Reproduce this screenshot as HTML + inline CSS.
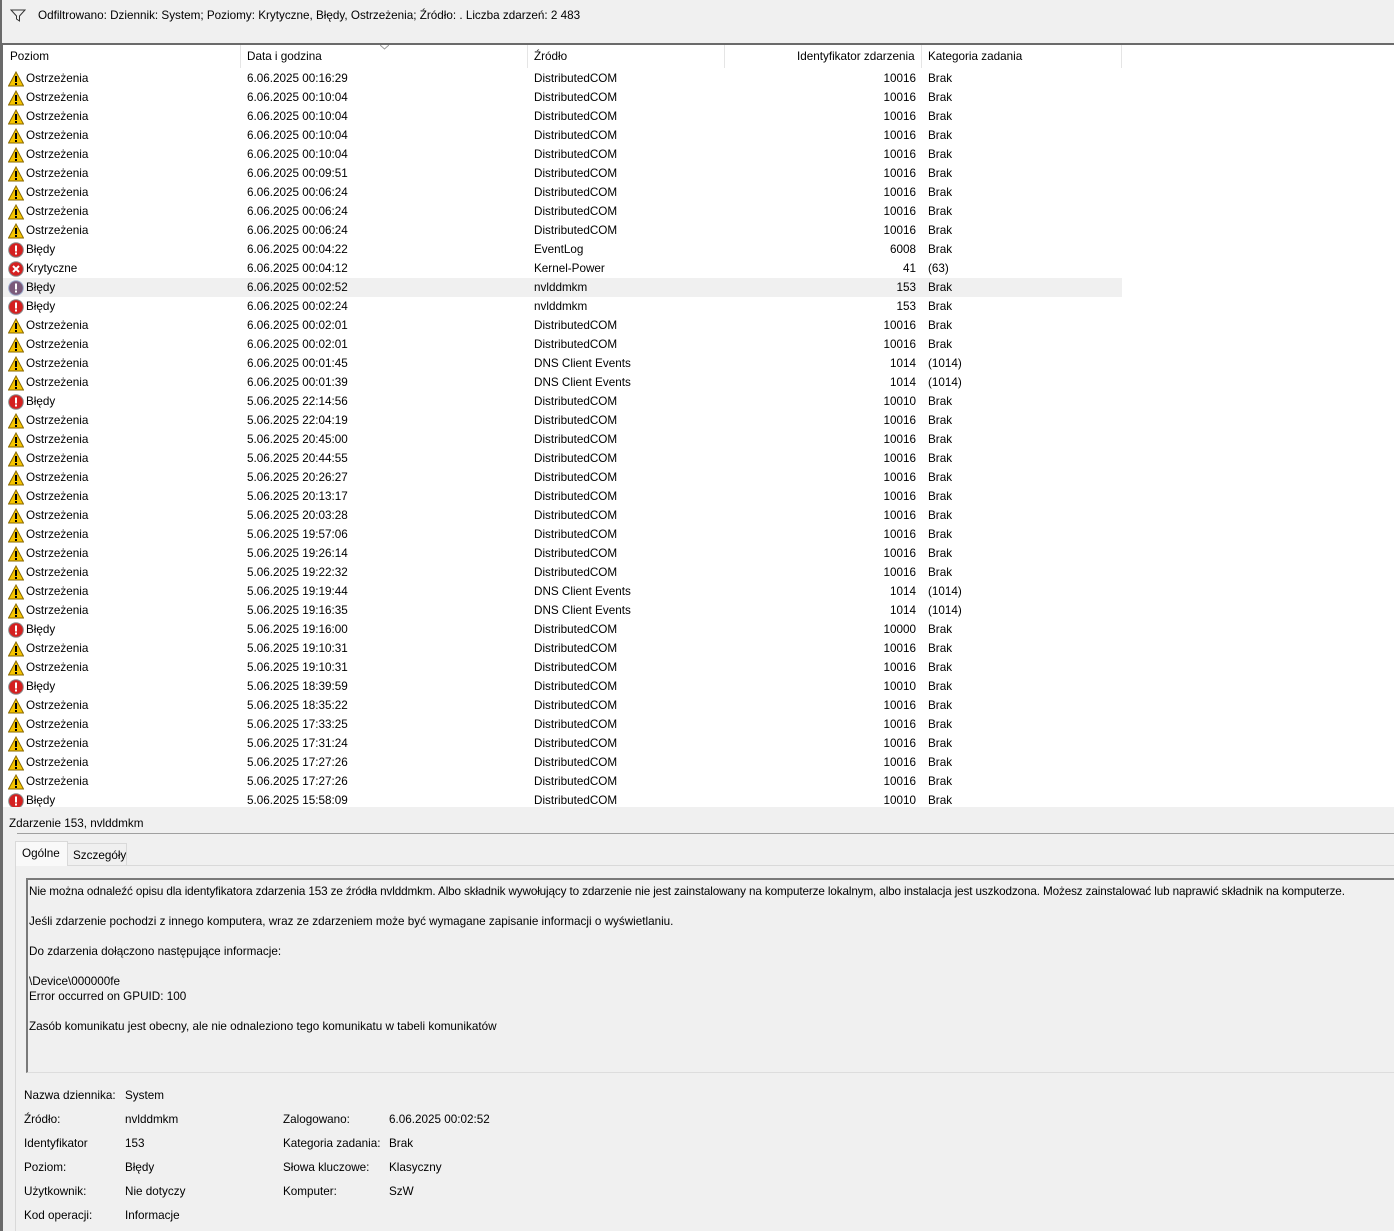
<!DOCTYPE html>
<html><head><meta charset="utf-8"><style>
*{box-sizing:border-box;margin:0;padding:0}
body{width:1394px;height:1231px;overflow:hidden;background:#f0f0f0;font-family:"Liberation Sans",sans-serif;font-size:11.7px;color:#000;position:relative}
.top{position:absolute;left:0;top:0;width:1394px;height:44px;background:#f0f0f0;border-left:2px solid #6a6a6a}
.top span{position:absolute;left:36px;top:9px}
.top svg{position:absolute;left:8px;top:9px}
.line44{position:absolute;left:0;top:43px;width:1394px;height:2px;background:#6a6a6a}
.list{position:absolute;left:0;top:45px;width:1394px;height:762px;background:#fff;border-left:3px solid #6a6a6a;overflow:hidden}
.hdr{position:absolute;top:0;height:23px;left:0;width:1391px}
.hdr div{position:absolute;top:5px}
.sep{position:absolute;top:0;width:1px;height:23px;background:#e5e5e5}
.r{position:absolute;left:0;height:19px;width:1391px;white-space:nowrap}
.r.sel{background:linear-gradient(to right,#f0f0f0 1119px,transparent 1119px)}
.r svg{position:absolute;left:5px;top:2px}
.r b{font-weight:normal;position:absolute;top:3px}
.c1{left:23px}.c2{left:244px}.c3{left:531px}.c4{right:478px;text-align:right}.c5{left:925px}
.det{position:absolute;left:0;top:812px;width:1394px;height:419px;border-left:3px solid #6a6a6a}
.dt{position:absolute;left:6px;top:5px}
.dl{position:absolute;left:14px;top:21px;width:1380px;height:1px;background:#a0a0a0}
.tab{position:absolute;top:30px;height:24px;border:1px solid #d9d9d9;border-bottom:none}
.body{position:absolute;left:12px;top:53px;width:1382px;height:366px;border-left:1px solid #d9d9d9;border-top:1px solid #d9d9d9}
.box{position:absolute;left:26px;top:878px;width:1368px;height:195px;border-left:2px solid #7a7a7a;border-top:2px solid #7a7a7a;border-bottom:1px solid #ddd}
.box p{position:absolute;left:1px;white-space:nowrap}
.f{position:absolute;white-space:nowrap}
</style></head><body>
<svg width="0" height="0" style="position:absolute"><defs>
<symbol id="w" viewBox="0 0 16 16"><path d="M8 1 L15.5 15 L0.5 15 Z" fill="#f5c400" stroke="#8a6a00" stroke-width="1"/><rect x="7" y="5" width="2" height="6" fill="#000"/><rect x="7" y="12" width="2" height="2" fill="#000"/></symbol>
<symbol id="e" viewBox="0 0 16 16"><circle cx="8" cy="8" r="7.3" fill="#d42020" stroke="#8a8a8a" stroke-width="1"/><rect x="7" y="3.5" width="2" height="6" fill="#fff"/><rect x="7" y="10.5" width="2" height="2" fill="#fff"/></symbol>
<symbol id="s" viewBox="0 0 16 16"><circle cx="8" cy="8" r="7.3" fill="#7a5a7a" stroke="#9aa8c8" stroke-width="1"/><rect x="7" y="3.5" width="2" height="6" fill="#fff"/><rect x="7" y="10.5" width="2" height="2" fill="#fff"/></symbol>
<symbol id="c" viewBox="0 0 16 16"><circle cx="8" cy="8" r="7.3" fill="#d42020" stroke="#8a8a8a" stroke-width="1"/><path d="M5 5 L11 11 M11 5 L5 11" stroke="#fff" stroke-width="2"/></symbol>
</defs></svg>
<div class="top"><svg width="16" height="14" viewBox="0 0 16 14"><path d="M1 1 H15 L9.5 7 V12 L6.5 10 V7 Z" fill="none" stroke="#333"/></svg><span>Odfiltrowano: Dziennik: System; Poziomy: Krytyczne, Błędy, Ostrzeżenia; Źródło: . Liczba zdarzeń: 2 483</span></div>
<div class="line44"></div>
<div class="list">
<div class="hdr"><div style="left:7px">Poziom</div><div style="left:244px">Data i godzina</div><div style="left:531px">Źródło</div><div style="left:794px">Identyfikator zdarzenia</div><div style="left:925px">Kategoria zadania</div>
<span class="sep" style="left:237px"></span><span class="sep" style="left:524px"></span><span class="sep" style="left:721px"></span><span class="sep" style="left:918px"></span><span class="sep" style="left:1118px"></span>
<svg style="position:absolute;left:377px;top:0" width="9" height="5"><path d="M0 0 L4.5 4 L9 0" fill="none" stroke="#999"/></svg></div>
<div class="r" style="top:24px"><svg width="16" height="16"><use href="#w"/></svg><b class="c1">Ostrzeżenia</b><b class="c2">6.06.2025 00:16:29</b><b class="c3">DistributedCOM</b><b class="c4">10016</b><b class="c5">Brak</b></div>
<div class="r" style="top:43px"><svg width="16" height="16"><use href="#w"/></svg><b class="c1">Ostrzeżenia</b><b class="c2">6.06.2025 00:10:04</b><b class="c3">DistributedCOM</b><b class="c4">10016</b><b class="c5">Brak</b></div>
<div class="r" style="top:62px"><svg width="16" height="16"><use href="#w"/></svg><b class="c1">Ostrzeżenia</b><b class="c2">6.06.2025 00:10:04</b><b class="c3">DistributedCOM</b><b class="c4">10016</b><b class="c5">Brak</b></div>
<div class="r" style="top:81px"><svg width="16" height="16"><use href="#w"/></svg><b class="c1">Ostrzeżenia</b><b class="c2">6.06.2025 00:10:04</b><b class="c3">DistributedCOM</b><b class="c4">10016</b><b class="c5">Brak</b></div>
<div class="r" style="top:100px"><svg width="16" height="16"><use href="#w"/></svg><b class="c1">Ostrzeżenia</b><b class="c2">6.06.2025 00:10:04</b><b class="c3">DistributedCOM</b><b class="c4">10016</b><b class="c5">Brak</b></div>
<div class="r" style="top:119px"><svg width="16" height="16"><use href="#w"/></svg><b class="c1">Ostrzeżenia</b><b class="c2">6.06.2025 00:09:51</b><b class="c3">DistributedCOM</b><b class="c4">10016</b><b class="c5">Brak</b></div>
<div class="r" style="top:138px"><svg width="16" height="16"><use href="#w"/></svg><b class="c1">Ostrzeżenia</b><b class="c2">6.06.2025 00:06:24</b><b class="c3">DistributedCOM</b><b class="c4">10016</b><b class="c5">Brak</b></div>
<div class="r" style="top:157px"><svg width="16" height="16"><use href="#w"/></svg><b class="c1">Ostrzeżenia</b><b class="c2">6.06.2025 00:06:24</b><b class="c3">DistributedCOM</b><b class="c4">10016</b><b class="c5">Brak</b></div>
<div class="r" style="top:176px"><svg width="16" height="16"><use href="#w"/></svg><b class="c1">Ostrzeżenia</b><b class="c2">6.06.2025 00:06:24</b><b class="c3">DistributedCOM</b><b class="c4">10016</b><b class="c5">Brak</b></div>
<div class="r" style="top:195px"><svg width="16" height="16"><use href="#e"/></svg><b class="c1">Błędy</b><b class="c2">6.06.2025 00:04:22</b><b class="c3">EventLog</b><b class="c4">6008</b><b class="c5">Brak</b></div>
<div class="r" style="top:214px"><svg width="16" height="16"><use href="#c"/></svg><b class="c1">Krytyczne</b><b class="c2">6.06.2025 00:04:12</b><b class="c3">Kernel-Power</b><b class="c4">41</b><b class="c5">(63)</b></div>
<div class="r sel" style="top:233px"><svg width="16" height="16"><use href="#s"/></svg><b class="c1">Błędy</b><b class="c2">6.06.2025 00:02:52</b><b class="c3">nvlddmkm</b><b class="c4">153</b><b class="c5">Brak</b></div>
<div class="r" style="top:252px"><svg width="16" height="16"><use href="#e"/></svg><b class="c1">Błędy</b><b class="c2">6.06.2025 00:02:24</b><b class="c3">nvlddmkm</b><b class="c4">153</b><b class="c5">Brak</b></div>
<div class="r" style="top:271px"><svg width="16" height="16"><use href="#w"/></svg><b class="c1">Ostrzeżenia</b><b class="c2">6.06.2025 00:02:01</b><b class="c3">DistributedCOM</b><b class="c4">10016</b><b class="c5">Brak</b></div>
<div class="r" style="top:290px"><svg width="16" height="16"><use href="#w"/></svg><b class="c1">Ostrzeżenia</b><b class="c2">6.06.2025 00:02:01</b><b class="c3">DistributedCOM</b><b class="c4">10016</b><b class="c5">Brak</b></div>
<div class="r" style="top:309px"><svg width="16" height="16"><use href="#w"/></svg><b class="c1">Ostrzeżenia</b><b class="c2">6.06.2025 00:01:45</b><b class="c3">DNS Client Events</b><b class="c4">1014</b><b class="c5">(1014)</b></div>
<div class="r" style="top:328px"><svg width="16" height="16"><use href="#w"/></svg><b class="c1">Ostrzeżenia</b><b class="c2">6.06.2025 00:01:39</b><b class="c3">DNS Client Events</b><b class="c4">1014</b><b class="c5">(1014)</b></div>
<div class="r" style="top:347px"><svg width="16" height="16"><use href="#e"/></svg><b class="c1">Błędy</b><b class="c2">5.06.2025 22:14:56</b><b class="c3">DistributedCOM</b><b class="c4">10010</b><b class="c5">Brak</b></div>
<div class="r" style="top:366px"><svg width="16" height="16"><use href="#w"/></svg><b class="c1">Ostrzeżenia</b><b class="c2">5.06.2025 22:04:19</b><b class="c3">DistributedCOM</b><b class="c4">10016</b><b class="c5">Brak</b></div>
<div class="r" style="top:385px"><svg width="16" height="16"><use href="#w"/></svg><b class="c1">Ostrzeżenia</b><b class="c2">5.06.2025 20:45:00</b><b class="c3">DistributedCOM</b><b class="c4">10016</b><b class="c5">Brak</b></div>
<div class="r" style="top:404px"><svg width="16" height="16"><use href="#w"/></svg><b class="c1">Ostrzeżenia</b><b class="c2">5.06.2025 20:44:55</b><b class="c3">DistributedCOM</b><b class="c4">10016</b><b class="c5">Brak</b></div>
<div class="r" style="top:423px"><svg width="16" height="16"><use href="#w"/></svg><b class="c1">Ostrzeżenia</b><b class="c2">5.06.2025 20:26:27</b><b class="c3">DistributedCOM</b><b class="c4">10016</b><b class="c5">Brak</b></div>
<div class="r" style="top:442px"><svg width="16" height="16"><use href="#w"/></svg><b class="c1">Ostrzeżenia</b><b class="c2">5.06.2025 20:13:17</b><b class="c3">DistributedCOM</b><b class="c4">10016</b><b class="c5">Brak</b></div>
<div class="r" style="top:461px"><svg width="16" height="16"><use href="#w"/></svg><b class="c1">Ostrzeżenia</b><b class="c2">5.06.2025 20:03:28</b><b class="c3">DistributedCOM</b><b class="c4">10016</b><b class="c5">Brak</b></div>
<div class="r" style="top:480px"><svg width="16" height="16"><use href="#w"/></svg><b class="c1">Ostrzeżenia</b><b class="c2">5.06.2025 19:57:06</b><b class="c3">DistributedCOM</b><b class="c4">10016</b><b class="c5">Brak</b></div>
<div class="r" style="top:499px"><svg width="16" height="16"><use href="#w"/></svg><b class="c1">Ostrzeżenia</b><b class="c2">5.06.2025 19:26:14</b><b class="c3">DistributedCOM</b><b class="c4">10016</b><b class="c5">Brak</b></div>
<div class="r" style="top:518px"><svg width="16" height="16"><use href="#w"/></svg><b class="c1">Ostrzeżenia</b><b class="c2">5.06.2025 19:22:32</b><b class="c3">DistributedCOM</b><b class="c4">10016</b><b class="c5">Brak</b></div>
<div class="r" style="top:537px"><svg width="16" height="16"><use href="#w"/></svg><b class="c1">Ostrzeżenia</b><b class="c2">5.06.2025 19:19:44</b><b class="c3">DNS Client Events</b><b class="c4">1014</b><b class="c5">(1014)</b></div>
<div class="r" style="top:556px"><svg width="16" height="16"><use href="#w"/></svg><b class="c1">Ostrzeżenia</b><b class="c2">5.06.2025 19:16:35</b><b class="c3">DNS Client Events</b><b class="c4">1014</b><b class="c5">(1014)</b></div>
<div class="r" style="top:575px"><svg width="16" height="16"><use href="#e"/></svg><b class="c1">Błędy</b><b class="c2">5.06.2025 19:16:00</b><b class="c3">DistributedCOM</b><b class="c4">10000</b><b class="c5">Brak</b></div>
<div class="r" style="top:594px"><svg width="16" height="16"><use href="#w"/></svg><b class="c1">Ostrzeżenia</b><b class="c2">5.06.2025 19:10:31</b><b class="c3">DistributedCOM</b><b class="c4">10016</b><b class="c5">Brak</b></div>
<div class="r" style="top:613px"><svg width="16" height="16"><use href="#w"/></svg><b class="c1">Ostrzeżenia</b><b class="c2">5.06.2025 19:10:31</b><b class="c3">DistributedCOM</b><b class="c4">10016</b><b class="c5">Brak</b></div>
<div class="r" style="top:632px"><svg width="16" height="16"><use href="#e"/></svg><b class="c1">Błędy</b><b class="c2">5.06.2025 18:39:59</b><b class="c3">DistributedCOM</b><b class="c4">10010</b><b class="c5">Brak</b></div>
<div class="r" style="top:651px"><svg width="16" height="16"><use href="#w"/></svg><b class="c1">Ostrzeżenia</b><b class="c2">5.06.2025 18:35:22</b><b class="c3">DistributedCOM</b><b class="c4">10016</b><b class="c5">Brak</b></div>
<div class="r" style="top:670px"><svg width="16" height="16"><use href="#w"/></svg><b class="c1">Ostrzeżenia</b><b class="c2">5.06.2025 17:33:25</b><b class="c3">DistributedCOM</b><b class="c4">10016</b><b class="c5">Brak</b></div>
<div class="r" style="top:689px"><svg width="16" height="16"><use href="#w"/></svg><b class="c1">Ostrzeżenia</b><b class="c2">5.06.2025 17:31:24</b><b class="c3">DistributedCOM</b><b class="c4">10016</b><b class="c5">Brak</b></div>
<div class="r" style="top:708px"><svg width="16" height="16"><use href="#w"/></svg><b class="c1">Ostrzeżenia</b><b class="c2">5.06.2025 17:27:26</b><b class="c3">DistributedCOM</b><b class="c4">10016</b><b class="c5">Brak</b></div>
<div class="r" style="top:727px"><svg width="16" height="16"><use href="#w"/></svg><b class="c1">Ostrzeżenia</b><b class="c2">5.06.2025 17:27:26</b><b class="c3">DistributedCOM</b><b class="c4">10016</b><b class="c5">Brak</b></div>
<div class="r" style="top:746px"><svg width="16" height="16"><use href="#e"/></svg><b class="c1">Błędy</b><b class="c2">5.06.2025 15:58:09</b><b class="c3">DistributedCOM</b><b class="c4">10010</b><b class="c5">Brak</b></div>
</div>
<div style="position:absolute;left:0;top:807px;width:3px;height:5px;background:#6a6a6a"></div>
<div class="det">
<div class="dt">Zdarzenie 153, nvlddmkm</div>
<div class="dl"></div>
<div class="body"></div>
<div class="tab" style="left:12px;width:53px;background:#f9f9f9;height:25px;top:29px"><span style="position:absolute;left:6px;top:5px">Ogólne</span></div>
<div class="tab" style="left:64px;width:60px;top:31px;height:22px"><span style="position:absolute;left:5px;top:5px">Szczegóły</span></div>
</div>
<div class="box">
<p style="top:5px;letter-spacing:-0.12px">Nie można odnaleźć opisu dla identyfikatora zdarzenia 153 ze źródła nvlddmkm. Albo składnik wywołujący to zdarzenie nie jest zainstalowany na komputerze lokalnym, albo instalacja jest uszkodzona. Możesz zainstalować lub naprawić składnik na komputerze.</p>
<p style="top:35px">Jeśli zdarzenie pochodzi z innego komputera, wraz ze zdarzeniem może być wymagane zapisanie informacji o wyświetlaniu.</p>
<p style="top:65px">Do zdarzenia dołączono następujące informacje:</p>
<p style="top:95px">\Device\000000fe</p>
<p style="top:110px">Error occurred on GPUID: 100</p>
<p style="top:140px">Zasób komunikatu jest obecny, ale nie odnaleziono tego komunikatu w tabeli komunikatów</p>
</div>
<div class="f" style="left:24px;top:1089px">Nazwa dziennika:</div><div class="f" style="left:125px;top:1089px">System</div>
<div class="f" style="left:24px;top:1113px">Źródło:</div><div class="f" style="left:125px;top:1113px">nvlddmkm</div>
<div class="f" style="left:283px;top:1113px">Zalogowano:</div><div class="f" style="left:389px;top:1113px">6.06.2025 00:02:52</div>
<div class="f" style="left:24px;top:1137px">Identyfikator</div><div class="f" style="left:125px;top:1137px">153</div>
<div class="f" style="left:283px;top:1137px">Kategoria zadania:</div><div class="f" style="left:389px;top:1137px">Brak</div>
<div class="f" style="left:24px;top:1161px">Poziom:</div><div class="f" style="left:125px;top:1161px">Błędy</div>
<div class="f" style="left:283px;top:1161px">Słowa kluczowe:</div><div class="f" style="left:389px;top:1161px">Klasyczny</div>
<div class="f" style="left:24px;top:1185px">Użytkownik:</div><div class="f" style="left:125px;top:1185px">Nie dotyczy</div>
<div class="f" style="left:283px;top:1185px">Komputer:</div><div class="f" style="left:389px;top:1185px">SzW</div>
<div class="f" style="left:24px;top:1209px">Kod operacji:</div><div class="f" style="left:125px;top:1209px">Informacje</div>
</body></html>
